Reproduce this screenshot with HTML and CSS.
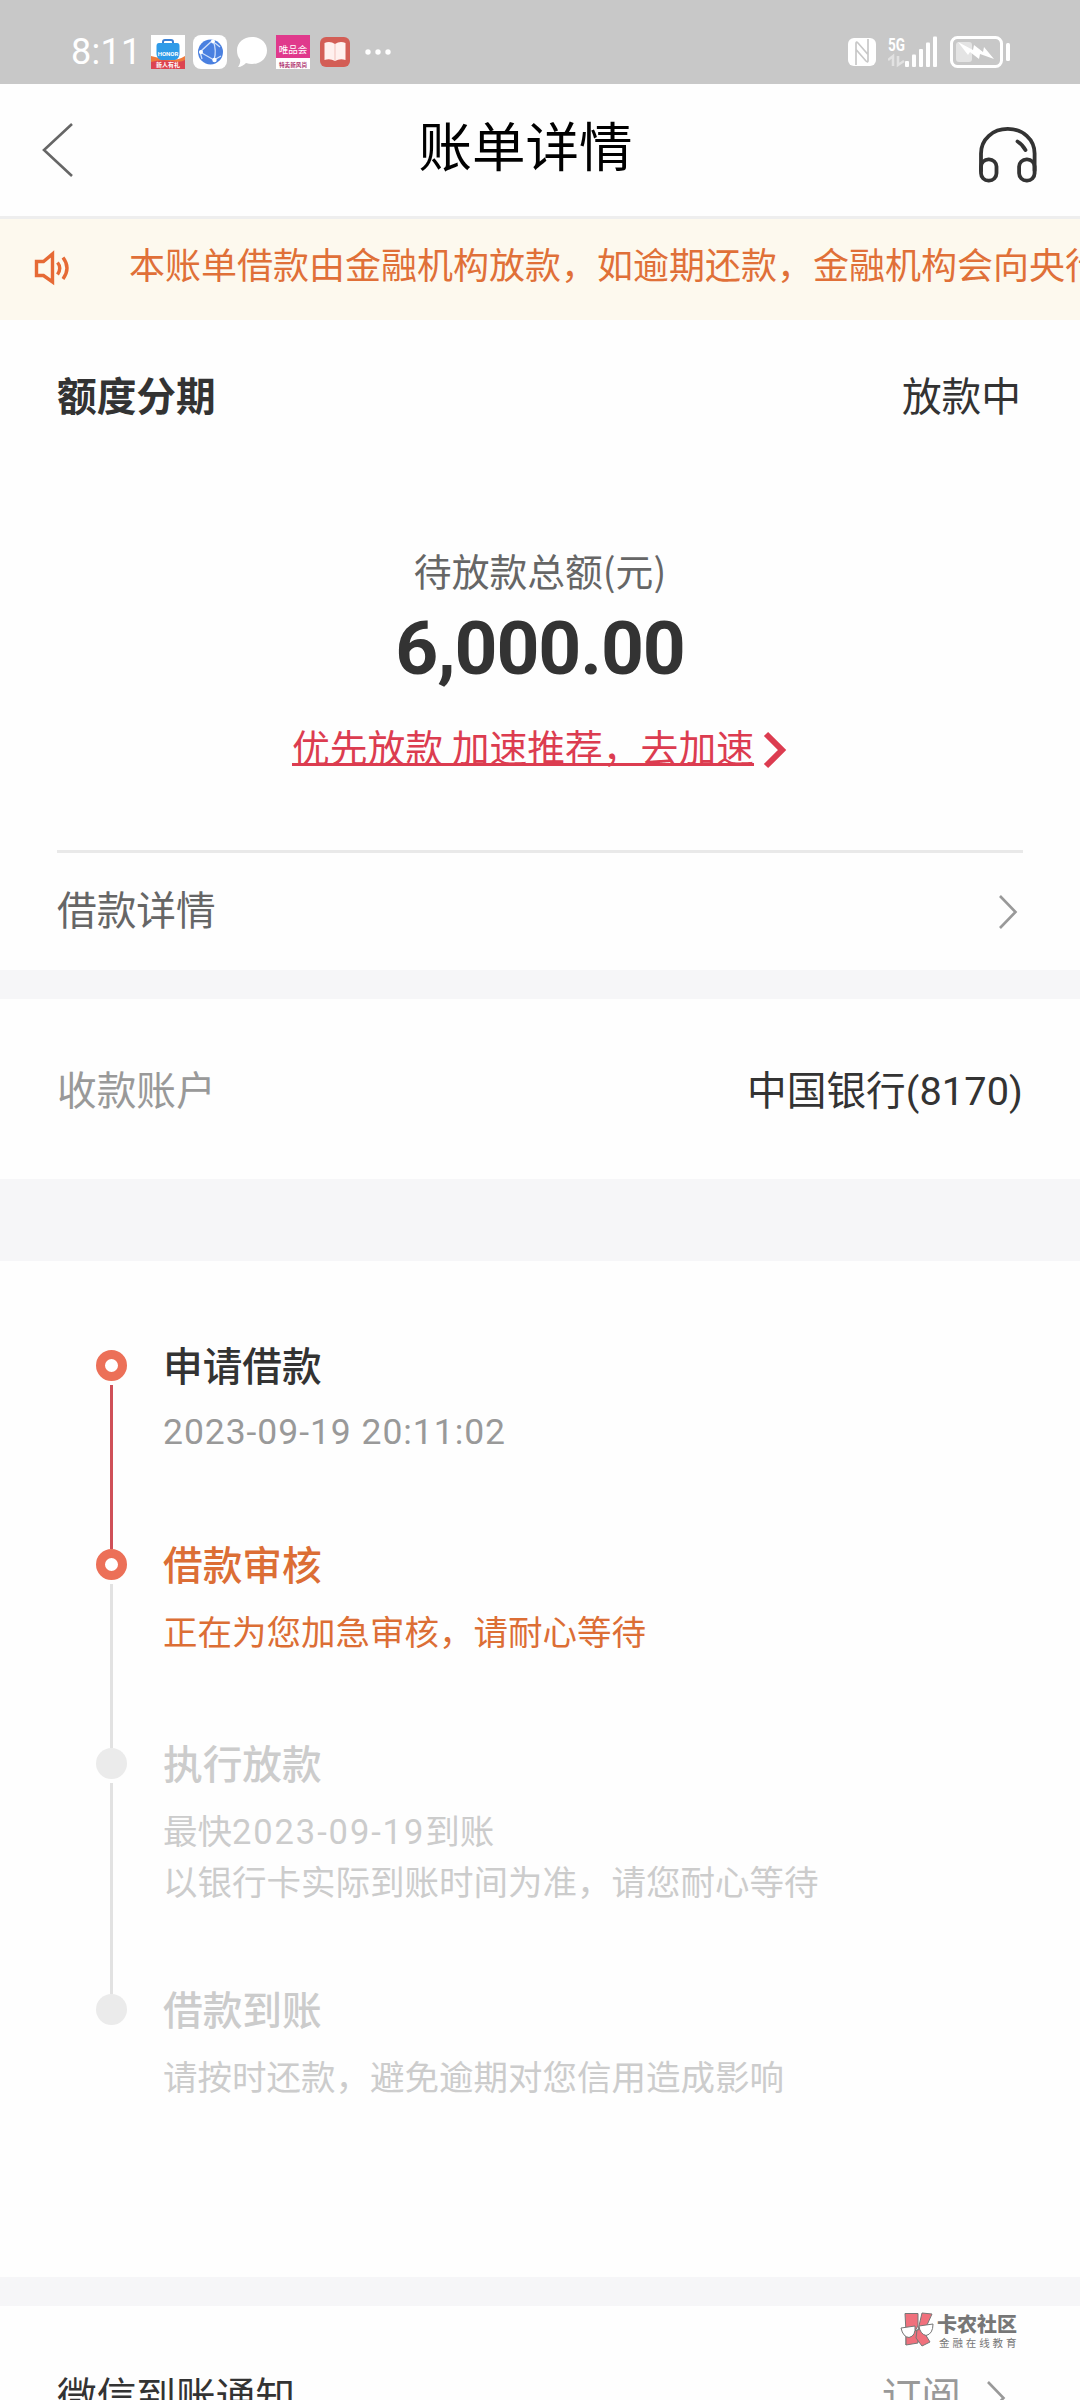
FILE: index.html
```
<!DOCTYPE html>
<html lang="zh-CN">
<head>
<meta charset="utf-8">
<title>账单详情</title>
<link rel="stylesheet" href="styles.css">
</head>
<body>
<div class="screen">
  <div class="status-bar">
    <div class="status-left">
      <span class="clock">8:11</span>
      <svg class="app-icon" width="34" height="34" viewBox="0 0 34 34">
        <rect width="34" height="34" fill="#fff"/>
        <path d="M0 21Q8 23 17 24.500T34 21V34H0Z" fill="#f07a3c"/>
        <path d="M0 27Q10 24 20 26T34 25V34H0Z" fill="#dc4450"/>
        <path d="M12 9V7Q12 5 14 5H20Q22 5 22 7V9" fill="none" stroke="#3a80d4" stroke-width="2"/>
        <path d="M8 8H26Q28.500 8 28.500 11V19Q28 24 24 25H10Q6 24 5.500 19V11Q5.500 8 8 8Z" fill="#2f9be8"/>
        <text x="17" y="20.500" class="honor-word">HONOR</text>
        <text x="17" y="32" class="honor-tag">新人有礼</text>
      </svg>
      <svg class="app-icon" width="34" height="34" viewBox="0 0 34 34">
        <rect width="34" height="34" rx="8" fill="#fff"/>
        <circle cx="17.500" cy="17" r="12.500" fill="#4a80e0"/>
        <path d="M20 5L7 17L21 25M20 5Q24 16 21 25M22 8L27 12M21 25L28 21M7 17L9 24" fill="none" stroke="#cfe0fb" stroke-width="1.300"/>
        <circle cx="20" cy="6.500" r="2" fill="#fff"/><circle cx="8" cy="17" r="2" fill="#fff"/><circle cx="21.500" cy="25" r="2.200" fill="#fff"/>
      </svg>
      <svg class="bubble" width="32" height="32" viewBox="0 0 32 32">
        <path d="M16 1C24.500 1 31 6.500 31 14.500S24.500 28 16 28C14 28 12 27.600 10 27C8 29 5 31 2 31C4 28 4.500 26 4 23.500C2 21 1 18 1 14.500C1 6.500 7.500 1 16 1Z" fill="#fff"/>
      </svg>
      <svg class="app-icon" width="34" height="34" viewBox="0 0 34 34">
        <rect width="34" height="34" fill="#fff"/>
        <rect width="34" height="23" fill="#e0398c"/>
        <text x="17" y="18" class="vip-word">唯品会</text>
        <text x="17" y="31.500" class="vip-tag">特卖新风尚</text>
      </svg>
      <svg class="book" width="30" height="30" viewBox="0 0 30 30">
        <rect width="30" height="30" rx="6" fill="#d35e56"/>
        <path d="M15 7Q10 3.500 4.500 6V23Q10 21 15 24Q20 21 25.500 23V6Q20 3.500 15 7Z" fill="#fff0ee"/>
        <path d="M15 7V24" stroke="#f3c8c4" stroke-width="1.200"/>
      </svg>
      <svg class="dots" width="26" height="8" viewBox="0 0 26 8">
        <g fill="#fff"><circle cx="3" cy="4" r="2.700"/><circle cx="13" cy="4" r="2.700"/><circle cx="23" cy="4" r="2.700"/></g>
      </svg>
    </div>
    <div class="status-right">
      <svg width="28" height="28" viewBox="0 0 28 28">
        <rect width="28" height="28" rx="6" fill="#fff"/>
        <path d="M8 27V5.500Q8 3 10 5L20 16.500V6M20 1V22.500Q20 25 18 23L8 11.500" fill="none" stroke="#c8c8c8" stroke-width="1.700"/>
      </svg>
      <svg class="signal" width="50" height="32" viewBox="0 0 50 32">
        <text x="0" y="14.500" class="net" textLength="17" lengthAdjust="spacingAndGlyphs">5G</text>
        <path d="M0 24L5 20V30M16 25L10 29V20" fill="none" stroke="#e2e2e2" stroke-width="2.500"/>
        <g fill="#fff"><rect x="17" y="25" width="4" height="6" rx="1"/><rect x="24" y="18.500" width="4" height="12.500" rx="1"/><rect x="31" y="13" width="4" height="18" rx="1"/><rect x="38" y="6.500" width="4" height="24.500" rx="1"/><rect x="45" y="0.500" width="4" height="30.500" rx="1"/></g>
      </svg>
      <svg width="61" height="32" viewBox="0 0 61 32">
        <rect x="1.500" y="1.500" width="50" height="29" rx="6" fill="none" stroke="#fff" stroke-width="3"/>
        <rect x="6" y="6" width="16" height="20" rx="3" fill="#e4e4e4"/>
        <path d="M8 6L23 14L24 9L33 16L34 11L44 23L30 18L29 23L20 16L18 19Z" fill="#fff"/>
        <rect x="56" y="7" width="4" height="18" rx="1.500" fill="#fff"/>
      </svg>
    </div>
  </div>

  <header class="nav">
    <svg class="back" width="34" height="58" viewBox="0 0 34 58"><path d="M31 3L3 29L31 55" fill="none" stroke="#666" stroke-width="2.600"/></svg>
    <h1>账单详情</h1>
    <svg class="headset" width="60" height="58" viewBox="0 0 60 60" preserveAspectRatio="none">
      <g fill="none" stroke="#333" stroke-width="3.800" stroke-linecap="round">
        <path d="M3 46V28.500C3 13.500 15 3 29.800 3S56.600 13.500 56.600 28.500V46"/>
        <rect x="3" y="34.500" width="15.500" height="22" rx="7.500"/>
        <rect x="41.100" y="34.500" width="15.500" height="22" rx="7.500"/>
        <path d="M39.500 16Q44.500 19 47.500 25"/>
      </g>
    </svg>
  </header>

  <div class="notice">
    <svg width="36" height="36" viewBox="0 0 36 36">
      <g fill="none" stroke="#e66a35" stroke-width="3.400">
        <path d="M2.500 11.500H9.500L18.500 4V32L9.500 25.500H2.500Z"/>
        <path d="M23.500 12.500Q28 18 23.500 24.500M29 7.500Q37 18 29 29"/>
      </g>
    </svg>
    <p>本账单借款由金融机构放款，如逾期还款，金融机构会向央行征信系统报送</p>
  </div>

  <section class="summary">
    <div class="row"><strong>额度分期</strong><span>放款中</span></div>
    <p class="label">待放款总额(元)</p>
    <p class="amount">6,000.00</p>
    <a class="boost"><span>优先放款 加速推荐，去加速</span>
      <svg width="26" height="40" viewBox="0 0 26 40"><path d="M4 4L20 20L4 36" fill="none" stroke="#dc3c50" stroke-width="6"/></svg>
    </a>
    <div class="detail"><span>借款详情</span>
      <svg width="22" height="36" viewBox="0 0 22 36"><path d="M2 2L17.500 18L2 34" fill="none" stroke="#999" stroke-width="2.600"/></svg>
    </div>
  </section>

  <section class="account"><span class="muted">收款账户</span><span>中国银行<span class="digits card">(8170)</span></span></section>

  <section class="progress">
    <ol>
      <li class="done"><div class="rail"><i class="dot"></i><i class="line"></i></div>
        <div class="body"><h2>申请借款</h2><p class="date">2023-09-19 20:11:02</p></div></li>
      <li class="current"><div class="rail"><i class="dot"></i><i class="line"></i></div>
        <div class="body"><h2>借款审核</h2><p>正在为您加急审核，请耐心等待</p></div></li>
      <li class="pending long"><div class="rail"><i class="dot"></i><i class="line"></i></div>
        <div class="body"><h2>执行放款</h2><p>最快<span class="digits">2023-09-19</span>到账<br>以银行卡实际到账时间为准，请您耐心等待</p></div></li>
      <li class="pending"><div class="rail"><i class="dot"></i></div>
        <div class="body"><h2>借款到账</h2><p>请按时还款，避免逾期对您信用造成影响</p></div></li>
    </ol>
  </section>

  <section class="subscribe">
    <span>微信到账通知</span>
    <span class="action">订阅
      <svg width="22" height="36" viewBox="0 0 22 36"><path d="M2 2L17.500 18L2 34" fill="none" stroke="#999" stroke-width="2.600"/></svg>
    </span>
  </section>

  <div class="watermark">
    <svg width="34" height="36" viewBox="0 0 34 36">
      <g fill="#f0707c" stroke="#777" stroke-width="1">
        <path d="M5 1.500H18V14L6 33V20Z"/>
        <path d="M6 22L17 18L18 31L6 33Z"/>
        <path d="M22 1L32 2L27 13L18 18Z"/>
        <path d="M17 18L22 17L30 30L22 34L16 26Z"/>
      </g>
      <g fill="#fff" stroke="#777" stroke-width="1">
        <path d="M1 16L15 14Q16 24 9 25.500Q3 25 1 16Z"/>
        <path d="M19 14L33 12Q33 22 26 23.500Q20 22 19 14Z"/>
      </g>
    </svg>
    <div><b>卡农社区</b><small>金融在线教育</small></div>
  </div>
</div>
</body>
</html>
```
FILE: styles.css
```
* { box-sizing: border-box; margin: 0; padding: 0; }

body {
  width: 1080px;
  height: 2400px;
  overflow: hidden;
  font-family: "Noto Sans CJK SC", sans-serif;
  font-size: 39.7px;
  line-height: 56px;
  color: #333;
  background: #fefefe;
}

svg { display: block; flex: none; }

.screen {
  position: relative;
  height: 2400px;
  overflow: hidden;
  background: #f6f6f8;
}

/* status bar */
.status-bar {
  display: flex;
  justify-content: space-between;
  align-items: center;
  height: 84px;
  padding: 20px 69px 0 71px;
  background: #c8c8c8;
  color: #fff;
}
.status-left, .status-right { display: flex; align-items: center; }
.clock {
  width: 80px;
  font: 36px/40px Roboto, sans-serif;
  letter-spacing: 0.3px;
}
.app-icon { margin-right: 8px; }
.bubble { margin: 0 8px 0 1px; }
.book { margin: 0 15px 0 2px; }
.status-right { gap: 12px; }
.honor-word { font: bold 6px Roboto, sans-serif; fill: #fff; text-anchor: middle; }
.honor-tag { font: bold 6px "Noto Sans CJK SC", sans-serif; fill: #fff; text-anchor: middle; }
.vip-word { font: 9.5px "Noto Sans CJK SC", sans-serif; fill: #fff; text-anchor: middle; }
.vip-tag { font: bold 5.6px "Noto Sans CJK SC", sans-serif; fill: #b0356f; text-anchor: middle; }
.net { font: bold 18px Roboto, sans-serif; fill: #fff; }

/* title bar */
.nav {
  display: grid;
  grid-template-columns: 1fr auto 1fr;
  align-items: center;
  height: 135px;
  padding: 0 42px 0 41px;
  border-bottom: 3px solid #eee;
  background: #fefefe;
}
.nav h1 { padding: 0 28px 13px 0; font-size: 53.5px; font-weight: 400; line-height: 72px; color: #000; }
.headset { justify-self: end; margin-top: 10px; }

/* scrolling notice */
.notice {
  display: flex;
  align-items: center;
  gap: 59px;
  height: 101px;
  padding-left: 34px;
  overflow: hidden;
  white-space: nowrap;
  background: #fdf9ee;
  color: #e07038;
  font-size: 36px;
}
.notice svg { margin-bottom: 3px; }
.notice p { padding-bottom: 13px; }

/* amount summary */
.summary { height: 650px; padding: 46px 57px 0; background: #fefefe; text-align: center; }
.row, .detail, .account, .subscribe { display: flex; justify-content: space-between; }
.row { padding-right: 2px; }
.label { margin-top: 121px; font-size: 37.8px; line-height: 54px; color: #666; }
.amount { margin-top: 11px; font: bold 75px/80px Roboto, sans-serif; letter-spacing: -1.1px; }
.boost {
  display: flex;
  justify-content: center;
  align-items: center;
  gap: 8px;
  margin-top: 31px;
  font-size: 37.8px;
  line-height: 54px;
  color: #dc3c50;
}
.boost span { text-decoration: underline; text-decoration-thickness: 3px; text-underline-offset: 1px; text-decoration-skip-ink: none; }
.boost svg { margin-top: 8px; }
.detail {
  align-items: center;
  height: 120px;
  margin-top: 77px;
  padding: 0 3px 8px 0;
  border-top: 3px solid #e9e9e9;
  color: #666;
}
.detail svg { margin-top: 9px; }

/* receiving account */
.account {
  align-items: center;
  height: 180px;
  margin-top: 29px;
  padding: 0 57px 3px;
  background: #fefefe;
}
.muted { color: #999; }
.digits { font-family: Roboto, sans-serif; line-height: 1; letter-spacing: 1.9px; }
.card { letter-spacing: 0.1px; }

/* loan progress */
.progress { height: 1016px; margin-top: 82px; padding: 89px 57px 0 96px; background: #fefefe; }
.progress ol { list-style: none; }
.progress li { display: flex; gap: 36px; height: 199px; }
.progress li.long { height: 246px; }
.rail { display: flex; flex-direction: column; align-items: center; gap: 4px; width: 31px; }
.dot { width: 31px; height: 31px; border-radius: 50%; background: #ebebeb; flex: none; }
.line { width: 3px; flex: 1; background: #e2e2e2; }
.done .dot, .current .dot { border: 9px solid #ec7058; background: #fff; }
.done .line { background: #cf5058; }
.body { margin-top: -11px; }
.body h2 { font-size: 39.7px; font-weight: 500; line-height: 50px; }
.body p { margin-top: 17px; font-size: 34.5px; line-height: 51px; }
.body .date { padding-top: 1px; color: #999; font-family: Roboto, sans-serif; font-size: 35.5px; letter-spacing: 0.95px; }
.current .body { color: #dc6e35; }
.pending .body { color: #ccc; }

/* notification row */
.subscribe { height: 160px; margin-top: 29px; padding: 60px 57px 0; background: #fefefe; }
.action { display: flex; gap: 25px; color: #999; }
.action svg { margin-top: 14px; margin-right: 15px; }

.watermark {
  position: absolute;
  left: 900px;
  top: 2312px;
  display: flex;
  gap: 3px;
  color: #777;
}
.watermark b { display: block; font-size: 20px; font-weight: 900; line-height: 24px; }
.watermark small { display: block; padding-left: 2px; font-size: 10.5px; line-height: 13px; letter-spacing: 2.9px; }
```
